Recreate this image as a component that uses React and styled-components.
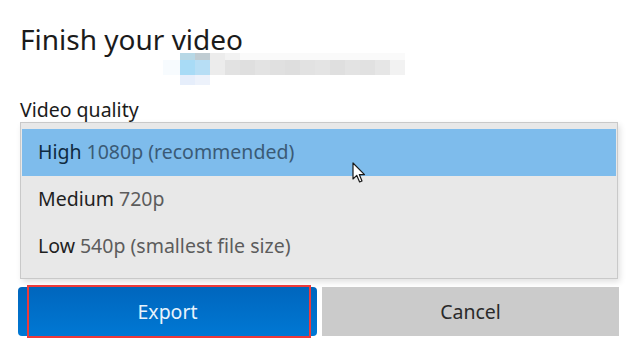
import React from "react";
import styled, { createGlobalStyle } from "styled-components";

const Global = createGlobalStyle`
  html, body { margin: 0; padding: 0; background: #ffffff; }
  body { font-family: "Noto Sans", "Open Sans", sans-serif; overflow: hidden; }
`;

const Page = styled.div`
  position: relative;
  width: 637px;
  height: 358px;
  padding: 0 18px 0 18px;
  box-sizing: border-box;
  display: flex;
  flex-direction: column;
`;

const Title = styled.h1`
  margin: 22px 0 0 2px;
  font-size: 28px;
  line-height: 34px;
  font-weight: 400;
  color: #1b1b1b;
`;

const Redaction = styled.div`
  margin: -3px 0 0 145px;
  display: grid;
  grid-template-rows: 7px 15px 10px;
  width: 242px;
`;

const RedRow = styled.div`
  display: flex;
`;

const Cell = styled.div`
  flex: 0 0 ${p => p.w || 15}px;
  background: ${p => p.c};
`;

const Label = styled.div`
  margin: 13px 0 0 2px;
  font-size: 19.5px;
  line-height: 24px;
  color: #1b1b1b;
`;

const Dropdown = styled.ul`
  list-style: none;
  margin: 0 0 0 2px;
  width: 598px;
  box-sizing: border-box;
  padding: 6px 1px 8px 1px;
  background: #e8e8e8;
  border: 1px solid #c9c9c9;
  box-shadow: 2px 3px 6px rgba(0, 0, 0, 0.12);
  display: flex;
  flex-direction: column;
`;

const Option = styled.li`
  height: 47px;
  box-sizing: border-box;
  padding: 0 0 3px 16px;
  display: flex;
  align-items: center;
  font-size: 19.5px;
  background: ${p => (p.selected ? "#7ebcec" : "transparent")};
`;

const Hint = styled.span`
  color: ${p => (p.selected ? "#3a5a76" : "#5c5c5c")};
  margin-left: 5px;
`;

const Main = styled.span`
  color: ${p => (p.selected ? "#0f2a40" : "#1f1f1f")};
`;

const Buttons = styled.div`
  margin-top: 8px;
  display: grid;
  grid-template-columns: 299px 297px;
  gap: 5px;
`;

const Button = styled.button`
  position: relative;
  height: 49px;
  border: none;
  border-radius: ${p => (p.primary ? "4px" : "0")};
  font-family: inherit;
  font-size: 19.5px;
  color: ${p => (p.primary ? "#e8f3fc" : "#2a2a2a")};
  background: ${p =>
    p.primary ? "linear-gradient(#0066bd, #0078d4)" : "#cbcbcb"};
  padding: 0;
`;

const Highlight = styled.span`
  position: absolute;
  left: 9px;
  right: 6px;
  top: -2px;
  bottom: -2px;
  border: 2px solid #ee3a3a;
  pointer-events: none;
`;

const Cursor = styled.svg`
  position: absolute;
  left: 352px;
  top: 162px;
  pointer-events: none;
`;

const row1 = [
  ["#ffffff", 17], ["#b7d8e6", 15], ["#c0ccd2", 15], ["#ececec", 15], ["#f2f2f2", 15],
  ["#fafafa", 165]
];
const row2 = [
  ["#f7fbfe", 17], ["#a8dbf6", 15], ["#b7def5", 15], ["#ececec", 15], ["#e2e2e2", 15],
  ["#dfdfdf", 15], ["#e3e3e3", 15], ["#e0e0e0", 15], ["#dedede", 15], ["#e2e2e2", 15],
  ["#e4e4e4", 15], ["#dfdfdf", 15], ["#e3e3e3", 15], ["#e1e1e1", 15], ["#e6e6e6", 15], ["#f2f2f2", 15]
];
const row3 = [
  ["#ffffff", 17], ["#e6eefb", 15], ["#edf2fb", 15], ["#ffffff", 195]
];

const options = [
  { main: "High", hint: "1080p (recommended)", selected: true },
  { main: "Medium", hint: "720p" },
  { main: "Low", hint: "540p (smallest file size)" },
];

export default function App() {
  return (
    <>
      <Global />
      <Page>
        <Title>Finish your video</Title>
        <Redaction>
          {[row1, row2, row3].map((r, i) => (
            <RedRow key={i}>
              {r.map(([c, w], j) => <Cell key={j} c={c} w={w} />)}
            </RedRow>
          ))}
        </Redaction>
        <Label>Video quality</Label>
        <Dropdown>
          {options.map(o => (
            <Option key={o.main} selected={o.selected}>
              <Main selected={o.selected}>{o.main}</Main>
              <Hint selected={o.selected}>{o.hint}</Hint>
            </Option>
          ))}
        </Dropdown>
        <Buttons>
          <Button primary>
            Export
            <Highlight />
          </Button>
          <Button>Cancel</Button>
        </Buttons>
        <Cursor width="14" height="22" viewBox="0 0 14 22">
          <path d="M1 1 L1 17 L4.8 13.4 L7.6 20 L10 19 L7.3 12.6 L12.5 12.6 Z"
            fill="#ffffff" stroke="#1a1a1a" strokeWidth="1.2" strokeLinejoin="round" />
        </Cursor>
      </Page>
    </>
  );
}
